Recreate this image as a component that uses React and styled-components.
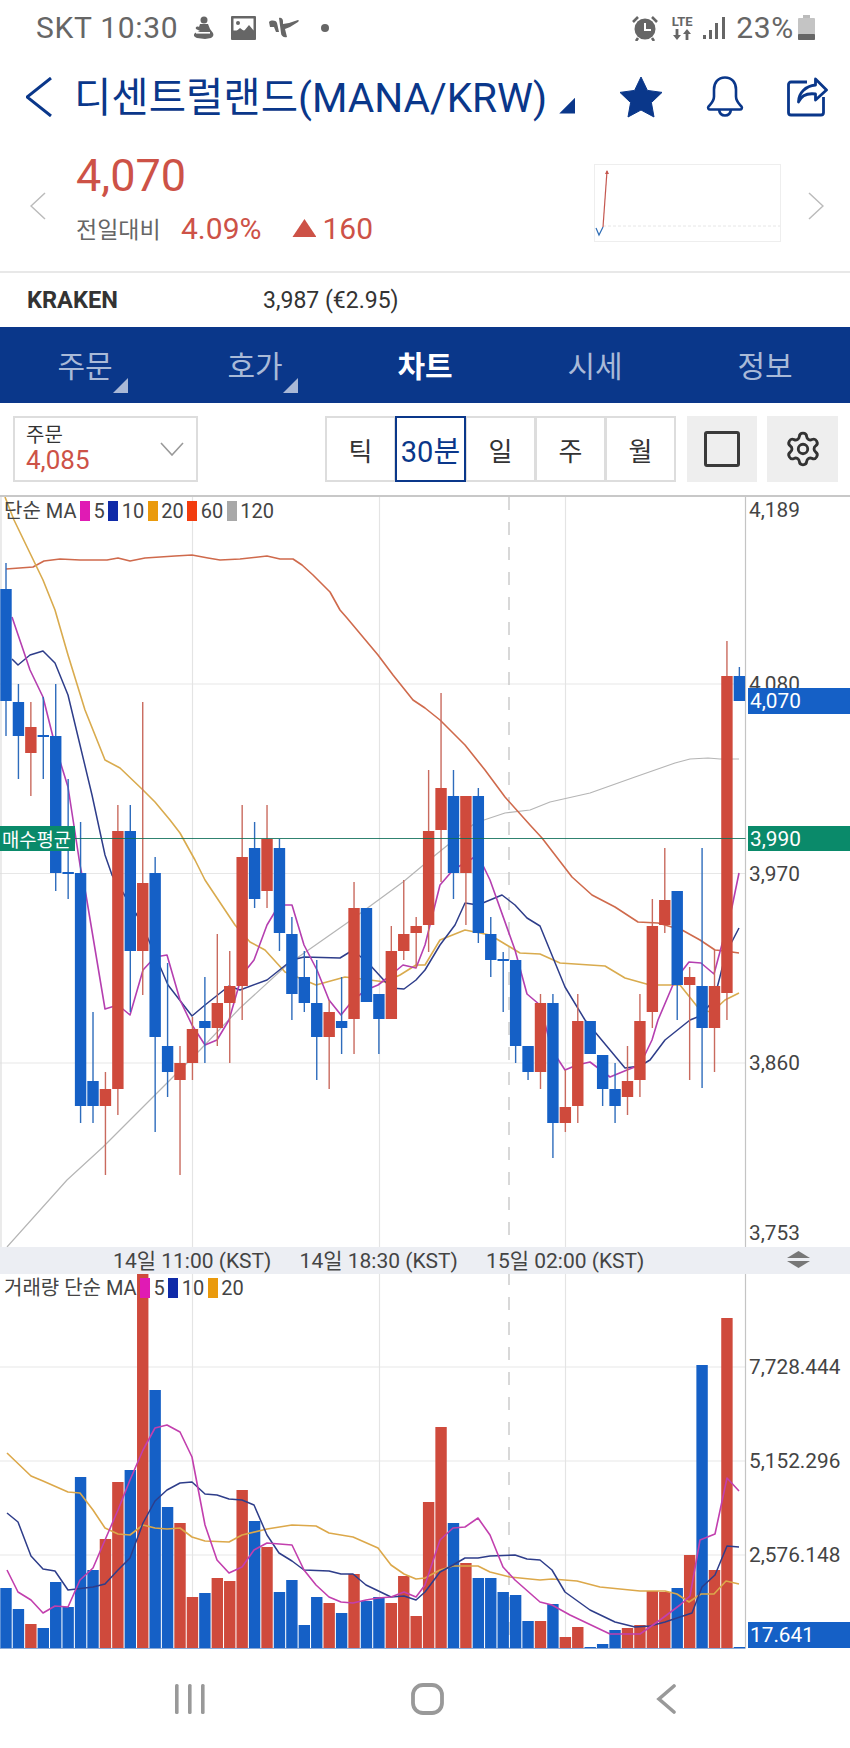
import React from "react";
import styled, { createGlobalStyle } from "styled-components";
import { Settings } from "lucide-react";

const RED = "#cf4a3c";
const BLUE = "#1560c6";
const NAVY = "#0a378a";
const TEXT_RED = "#cd5247";

const GlobalStyle = createGlobalStyle`
  html, body {
    margin: 0;
    padding: 0;
    background: #fff;
  }
  body {
    font-family: Roboto, "Noto Sans CJK KR", sans-serif;
    color: #333;
  }
`;

const Page = styled.div`
  width: 850px;
  height: 1748px;
  display: flex;
  flex-direction: column;
  overflow: hidden;
`;

const StatusBar = styled.div`
  height: 55px;
  display: flex;
  align-items: center;
  padding: 0 35px 0 36px;
  color: #666;
  font-size: 30px;
  letter-spacing: 0.7px;
`;

const StatusText = styled.span`
  line-height: 1;
`;

const StatusGroup = styled.div`
  display: flex;
  align-items: center;
  margin-left: ${(p) => p.$left || "0"};
`;

const Lte = styled.div`
  width: 26px;
  display: flex;
  flex-direction: column;
  align-items: center;
  font-size: 13px;
  font-weight: 700;
  line-height: 14px;
  letter-spacing: 0;
`;

const Header = styled.header`
  height: 83px;
  display: flex;
  align-items: center;
  padding: 0 22px 0 26px;
`;

const Title = styled.h1`
  margin: 0 0 0 22px;
  padding-top: 3px;
  font-size: 40.6px;
  font-weight: 400;
  color: ${NAVY};
  line-height: 1;
  white-space: nowrap;
`;

const TitleCaret = styled.span`
  width: 16px;
  height: 16px;
  margin: 18px 0 0 12px;
  background: ${NAVY};
  clip-path: polygon(100% 0, 100% 100%, 0 100%);
`;

const HeaderIcons = styled.div`
  display: flex;
  align-items: center;
  margin-left: auto;
`;

const Quote = styled.section`
  height: 133px;
  display: flex;
  align-items: center;
  border-bottom: 2px solid #e8e8e8;
`;

const PriceCol = styled.div`
  display: flex;
  flex-direction: column;
  margin-left: 30px;
  margin-top: -14px;
`;

const Price = styled.div`
  font-size: 45px;
  line-height: 54px;
  color: ${TEXT_RED};
`;

const ChangeRow = styled.div`
  display: flex;
  align-items: center;
  margin-top: 7px;
  height: 36px;
  color: ${TEXT_RED};
  font-size: 30px;
`;

const ChangeLabel = styled.span`
  width: 105px;
  font-size: 23px;
  color: #666;
`;

const UpArrow = styled.span`
  width: 24px;
  height: 18px;
  margin: 0 6px 0 31px;
  background: ${TEXT_RED};
  clip-path: polygon(50% 0, 100% 100%, 0 100%);
`;

const Spark = styled.div`
  width: 187px;
  height: 78px;
  margin: -3px 0 0 auto;
  border: 1px solid #eee;
  box-sizing: border-box;
`;

const ExchangeRow = styled.div`
  height: 54px;
  display: flex;
  align-items: center;
  padding-left: 27px;
  font-size: 23px;
  color: #333;
`;

const Exchange = styled.span`
  width: 236px;
  font-size: 23.6px;
  font-weight: 700;
`;

const Tabs = styled.nav`
  height: 76px;
  display: flex;
  background: ${NAVY};
`;

const Tab = styled.div`
  position: relative;
  flex: 1;
  display: flex;
  align-items: center;
  justify-content: center;
  padding-bottom: 2px;
  font-size: 30px;
  font-weight: ${(p) => (p.$active ? 700 : 400)};
  color: ${(p) => (p.$active ? "#fff" : "#a9bad8")};

  ${(p) =>
    p.$corner &&
    `&::after {
      content: "";
      position: absolute;
      right: 42px;
      bottom: 10px;
      width: 15px;
      height: 15px;
      background: #a9b8d6;
      clip-path: polygon(100% 0, 100% 100%, 0 100%);
    }`}
`;

const Toolbar = styled.div`
  height: 92px;
  display: flex;
  align-items: flex-start;
  padding: 13px 12px 0 13px;
  box-sizing: border-box;
`;

const Select = styled.div`
  width: 186px;
  height: 66px;
  box-sizing: border-box;
  display: flex;
  align-items: center;
  justify-content: space-between;
  padding: 0 12px 0 11px;
  border: 2px solid #ddd;
`;

const SelectLabel = styled.div`
  font-size: 20px;
  line-height: 22px;
  color: #333;
`;

const SelectValue = styled.div`
  font-size: 26px;
  line-height: 29px;
  color: ${TEXT_RED};
`;

const Segments = styled.div`
  display: flex;
  height: 66px;
  margin-left: 128px;
`;

const Segment = styled.div`
  width: 71px;
  margin-left: -1px;
  box-sizing: border-box;
  display: flex;
  align-items: center;
  justify-content: center;
  font-size: ${(p) => (p.$active ? "29px" : "26px")};
  color: ${(p) => (p.$active ? NAVY : "#333")};
  border: 2px solid ${(p) => (p.$active ? NAVY : "#ddd")};
  position: relative;
  z-index: ${(p) => (p.$active ? 1 : 0)};
`;

const SquareButton = styled.div`
  width: 71px;
  height: 66px;
  margin-left: ${(p) => p.$left || "10px"};
  display: flex;
  align-items: center;
  justify-content: center;
  background: #eeeeee;
  color: #333;
`;

const SquareBox = styled.div`
  width: 30px;
  height: 30px;
  border: 3px solid #3a3a3a;
  border-radius: 3px;
`;

const Panel = styled.div`
  position: relative;
  height: ${(p) => p.$height}px;
  border-top: ${(p) => (p.$ruled ? "2px solid #c8c8c8" : "none")};
  box-sizing: border-box;
`;

const Plot = styled.svg`
  display: block;
  width: 850px;
  height: 100%;
`;

const Legend = styled.div`
  position: absolute;
  top: ${(p) => p.$top}px;
  left: 4px;
  display: flex;
  align-items: center;
  font-size: 20px;
  line-height: 20px;
  color: #444;
  white-space: nowrap;
`;

const Swatch = styled.span`
  width: 10px;
  height: 20px;
  margin: 0 3.5px;
  background: ${(p) => p.$color};
`;

const AxisLabel = styled.div`
  position: absolute;
  left: 749px;
  top: ${(p) => p.$y}px;
  transform: translateY(-50%);
  font-size: 20.8px;
  line-height: 24px;
  color: #444;
`;

const PriceTag = styled.div`
  position: absolute;
  left: ${(p) => p.$left}px;
  top: ${(p) => p.$y}px;
  width: ${(p) => p.$width}px;
  height: ${(p) => p.$height}px;
  display: flex;
  align-items: center;
  padding-left: ${(p) => p.$pad}px;
  box-sizing: border-box;
  background: ${(p) => p.$color};
  color: #fff;
  font-size: ${(p) => p.$size || "20.8px"};
  white-space: nowrap;
`;

const TimeBar = styled.div`
  position: relative;
  height: 27px;
  display: flex;
  align-items: center;
  padding: 0 0 4px 99px;
  box-sizing: border-box;
  background: #eceef3;
  font-size: 21px;
  color: #444;
`;

const TimeLabel = styled.div`
  width: 186.5px;
  text-align: center;
  white-space: nowrap;
`;

const Resize = styled.div`
  position: absolute;
  left: 787px;
  top: 4px;
  display: flex;
  flex-direction: column;
  gap: 3px;
`;

const ResizeTip = styled.span`
  width: 23px;
  height: 7px;
  background: #777;
  clip-path: ${(p) =>
    p.$down
      ? "polygon(0 0, 100% 0, 50% 100%)"
      : "polygon(50% 0, 100% 100%, 0 100%)"};
`;

const BottomNav = styled.div`
  flex: 1;
  display: flex;
  align-items: center;
  color: #999;
`;

// top of wick, top of body, bottom of body, bottom of wick, colour (page y coords)
const candles = [
  [563, 589, 701, 736, "b"], [684, 702, 736, 779, "b"], [702, 727, 753, 796, "r"],
  [697, 735, 737, 779, "b"], [684, 736, 873, 891, "b"], [779, 872, 874, 899, "b"],
  [822, 873, 1106, 1123, "b"], [1012, 1081, 1106, 1123, "b"], [1072, 1089, 1106, 1175, "r"],
  [805, 831, 1089, 1115, "r"], [805, 831, 951, 1012, "b"], [702, 883, 951, 995, "r"],
  [857, 873, 1037, 1132, "b"], [963, 1046, 1072, 1097, "b"], [1046, 1063, 1080, 1175, "r"],
  [1017, 1029, 1063, 1080, "r"], [977, 1021, 1028, 1063, "b"], [934, 1003, 1028, 1046, "r"],
  [951, 986, 1003, 1063, "r"], [805, 857, 986, 1020, "r"], [822, 848, 899, 908, "b"],
  [805, 839, 891, 908, "r"], [839, 848, 933, 951, "b"], [917, 934, 994, 1020, "b"],
  [951, 977, 1003, 1012, "b"], [960, 1003, 1037, 1080, "b"], [1000, 1012, 1037, 1089, "r"],
  [977, 1021, 1028, 1054, "b"], [882, 908, 1019, 1054, "r"], [908, 908, 1002, 1002, "b"],
  [994, 994, 1019, 1054, "b"], [926, 951, 1019, 1019, "r"], [880, 934, 951, 960, "r"],
  [917, 926, 933, 968, "r"], [770, 831, 925, 952, "r"], [693, 788, 830, 882, "r"],
  [770, 796, 873, 899, "b"], [796, 796, 873, 925, "r"], [788, 796, 933, 943, "b"],
  [917, 934, 960, 977, "b"], [952, 959, 961, 1012, "b"], [960, 960, 1046, 1063, "b"],
  [1046, 1046, 1072, 1080, "b"], [994, 1003, 1072, 1089, "r"], [994, 1003, 1123, 1158, "b"],
  [1070, 1107, 1123, 1132, "r"], [994, 1021, 1106, 1123, "r"], [1021, 1021, 1054, 1054, "b"],
  [1055, 1055, 1089, 1106, "b"], [1063, 1089, 1106, 1123, "b"], [1046, 1081, 1097, 1115, "r"],
  [994, 1021, 1080, 1097, "r"], [899, 926, 1012, 1028, "r"], [848, 900, 925, 933, "r"],
  [891, 891, 985, 1020, "b"], [967, 977, 985, 1080, "r"], [848, 986, 1028, 1088, "b"],
  [950, 986, 1028, 1072, "r"], [641, 676, 993, 1020, "r"], [667, 676, 701, 701, "b"],
];

const volumes = [
  [1588, "b"], [1609, "b"], [1624, "r"], [1628, "b"], [1582, "b"], [1607, "b"], [1477, "b"],
  [1570, "b"], [1539, "r"], [1482, "r"], [1470, "b"], [1273, "r"], [1390, "b"], [1507, "b"],
  [1523, "r"], [1597, "r"], [1593, "b"], [1578, "r"], [1581, "r"], [1490, "r"], [1521, "b"],
  [1547, "r"], [1592, "b"], [1580, "b"], [1625, "b"], [1597, "b"], [1603, "r"], [1613, "b"],
  [1574, "r"], [1601, "b"], [1597, "b"], [1603, "r"], [1576, "r"], [1616, "r"], [1502, "r"],
  [1427, "r"], [1523, "b"], [1563, "r"], [1578, "b"], [1578, "b"], [1592, "b"], [1595, "b"],
  [1621, "b"], [1621, "r"], [1604, "b"], [1637, "r"], [1627, "r"], [1647, "b"], [1644, "b"],
  [1630, "b"], [1628, "r"], [1625, "r"], [1591, "r"], [1592, "r"], [1588, "b"], [1555, "r"],
  [1365, "b"], [1570, "r"], [1318, "r"], [1647, "b"],
];

const priceLines = [
  { color: "#b5b5b5", width: 1.2, pts: "7,1247 67,1180 103,1147 153,1097 200,1050 240,1008 287,965 347,923 403,882 433,857 475,823 505,813 530,810 550,802 590,793 635,777 675,763 690,759 708,758 720,759 739,759" },
  { color: "#cf6a4c", width: 1.6, pts: "6,569 33,567 44,561 60,559 80,560 107,560 118,558 130,561 145,558 175,556 192,555 208,558 220,560 240,559 267,556 280,559 293,559 302,565 313,575 330,592 340,610 347,618 378,655 393,675 413,700 425,708 440,720 465,745 485,770 505,797 530,825 542,838 572,877 592,895 615,907 638,922 658,923 682,930 700,940 715,950 725,951 739,953" },
  { color: "#d9ab4e", width: 1.6, pts: "5,497 14,520 43,580 55,610 68,655 85,710 105,760 120,768 143,790 155,802 170,820 180,833 195,860 205,880 235,925 250,942 265,950 285,972 316,985 345,977 370,980 385,982 400,975 416,965 425,965 440,940 465,930 490,935 520,953 540,954 560,963 590,965 605,966 625,978 650,985 665,985 680,985 700,1010 712,1012 725,1000 739,993" },
  { color: "#2e3d8a", width: 1.5, pts: "12,659 18,665 30,655 43,651 55,663 68,695 80,745 92,795 105,855 112,875 140,920 168,985 192,1016 205,1005 229,986 240,990 267,980 292,960 304,957 340,958 353,950 370,965 391,988 404,989 416,980 425,970 440,945 455,925 465,903 478,905 502,895 515,905 527,918 540,926 565,987 585,1020 625,1068 640,1066 650,1060 665,1040 690,1020 700,1016 714,1000 726,953 739,928" },
  { color: "#b53fb0", width: 1.6, pts: "12,617 30,670 43,697 55,745 68,787 80,865 86,895 105,1009 118,1005 130,1015 143,970 155,957 167,955 180,1000 192,1025 205,1045 217,1040 229,1020 242,975 254,960 267,925 279,905 292,905 304,945 317,970 329,1000 341,1015 353,1000 366,990 378,985 391,975 403,965 416,968 425,945 440,885 453,870 478,855 490,880 515,950 527,994 540,1005 552,1050 565,1070 577,1065 590,1062 610,1077 627,1070 640,1065 652,1040 658,1020 675,980 689,962 701,963 714,974 732,907 739,873" },
];

const volumeLines = [
  { color: "#dca84a", width: 1.6, pts: "7,1453 31,1476 43,1481 68,1492 80,1493 93,1510 105,1528 118,1534 130,1535 143,1525 155,1528 167,1529 180,1528 192,1537 205,1541 229,1542 242,1535 267,1529 292,1525 316,1526 329,1533 353,1537 378,1548 391,1565 404,1574 416,1579 425,1578 440,1570 453,1566 478,1566 490,1572 510,1577 540,1580 552,1579 577,1581 600,1587 640,1591 665,1591 677,1594 689,1602 701,1594 714,1594 726,1581 739,1584" },
  { color: "#2e3d8a", width: 1.5, pts: "7,1513 18,1522 31,1556 43,1569 55,1571 68,1590 93,1587 105,1584 118,1570 130,1558 143,1523 155,1501 167,1490 180,1483 192,1482 205,1494 217,1495 229,1499 242,1500 254,1505 267,1535 279,1553 292,1561 304,1570 329,1571 341,1574 353,1574 366,1585 391,1597 404,1596 416,1600 425,1592 440,1572 453,1565 465,1558 478,1558 490,1556 515,1555 527,1559 540,1560 552,1570 565,1592 590,1610 615,1622 635,1627 650,1626 665,1622 692,1613 702,1587 715,1575 727,1546 739,1547" },
  { color: "#c23fae", width: 1.6, pts: "7,1570 18,1592 31,1600 43,1613 55,1606 68,1607 80,1580 93,1568 105,1540 118,1510 130,1480 143,1450 155,1428 167,1425 180,1432 192,1457 205,1525 217,1560 229,1573 242,1567 254,1550 267,1543 292,1545 304,1570 316,1585 329,1597 341,1602 353,1603 366,1600 378,1598 391,1597 404,1592 416,1597 425,1585 440,1540 453,1528 465,1527 478,1518 490,1535 503,1567 515,1580 540,1602 552,1605 570,1615 610,1634 640,1634 660,1620 680,1605 690,1596 700,1540 715,1534 727,1478 739,1491" },
];

const centerX = (i) => 6 + 12.43 * i;
const GRID_X = [192.5, 379.5, 565.5];
const PLOT_RIGHT = 745.5;

function PriceChart() {
  return (
    <Plot viewBox="0 497 850 750">
      {[684, 873.5, 1063].map((y) => (
        <line key={y} x1="0" x2={PLOT_RIGHT} y1={y} y2={y} stroke="#e7e7e7" strokeWidth="1.2" />
      ))}
      {GRID_X.map((x) => (
        <line key={x} x1={x} x2={x} y1="495" y2="1247" stroke="#e4e4e4" strokeWidth="1.2" />
      ))}
      <line x1="1" x2="1" y1="495" y2="1247" stroke="#ddd" strokeWidth="1.2" />
      <line x1="509" x2="509" y1="497" y2="1247" stroke="#ccc" strokeWidth="1.5" strokeDasharray="13 12" />
      <line x1={PLOT_RIGHT} x2={PLOT_RIGHT} y1="495" y2="1247" stroke="#c4c4c4" strokeWidth="1.2" />
      {priceLines.map((l) => (
        <polyline key={l.color} points={l.pts} fill="none" stroke={l.color} strokeWidth={l.width} strokeLinejoin="round" />
      ))}
      {candles.map(([top, bodyTop, bodyBot, bottom, side], i) => (
        <g key={i}>
          <line
            x1={centerX(i)}
            x2={centerX(i)}
            y1={top}
            y2={bottom}
            stroke={side === "r" ? "#c96a5e" : "#2e6cbc"}
            strokeWidth="1.4"
          />
          <rect
            x={centerX(i) - 5.7}
            y={bodyTop}
            width="11.4"
            height={bodyBot - bodyTop}
            fill={side === "r" ? RED : BLUE}
          />
        </g>
      ))}
      <line x1="75" x2={PLOT_RIGHT} y1="838.5" y2="838.5" stroke="#0c6e58" strokeWidth="1.2" opacity="0.85" />
    </Plot>
  );
}

function VolumeChart() {
  return (
    <Plot viewBox="0 1274 850 376">
      {[1367, 1461, 1555].map((y) => (
        <line key={y} x1="0" x2={PLOT_RIGHT} y1={y} y2={y} stroke="#e7e7e7" strokeWidth="1.2" />
      ))}
      {GRID_X.map((x) => (
        <line key={x} x1={x} x2={x} y1="1274" y2="1648" stroke="#e4e4e4" strokeWidth="1.2" />
      ))}
      <line x1="509" x2="509" y1="1272" y2="1648" stroke="#ccc" strokeWidth="1.5" strokeDasharray="13 12" />
      <line x1={PLOT_RIGHT} x2={PLOT_RIGHT} y1="1274" y2="1648" stroke="#c4c4c4" strokeWidth="1.2" />
      <line x1="0" x2={PLOT_RIGHT} y1="1648.5" y2="1648.5" stroke="#8aa9d6" strokeWidth="1" />
      {volumes.map(([top, side], i) => (
        <rect
          key={i}
          x={centerX(i) - 5.7}
          y={top}
          width="11.4"
          height={1648 - top}
          fill={side === "r" ? RED : BLUE}
        />
      ))}
      {volumeLines.map((l) => (
        <polyline key={l.color} points={l.pts} fill="none" stroke={l.color} strokeWidth={l.width} strokeLinejoin="round" />
      ))}
    </Plot>
  );
}

function Chevron({ dir, width, height, color, stroke, style }) {
  const pts =
    dir === "left"
      ? `${width - 1},1 1,${height / 2} ${width - 1},${height - 1}`
      : `1,1 ${width - 1},${height / 2} 1,${height - 1}`;
  return (
    <svg width={width} height={height} style={style}>
      <polyline points={pts} fill="none" stroke={color} strokeWidth={stroke} />
    </svg>
  );
}

function StatusLeftIcons() {
  return (
    <StatusGroup $left="14px">
      <svg width="22" height="24" viewBox="0 0 22 24" fill="#666">
        <circle cx="12" cy="4" r="3.5" />
        <path d="M8 8h8l2 5 3 4c1 2 0 4-2 5l-6 1-8-1c-3-1-4-3-2-5l5-2-4-2c-1-2 1-3 3-2z" />
        <rect x="4" y="16" width="14" height="1.6" fill="#fff" />
      </svg>
      <svg width="25" height="24" viewBox="0 0 25 24" style={{ marginLeft: 17 }}>
        <rect width="25" height="24" rx="1" fill="#666" />
        <rect x="2.5" y="2.5" width="20" height="12" fill="#fff" />
        <circle cx="7" cy="7" r="2" fill="#666" />
        <path d="M2 18l7-6 4 3 5-6 5 6v3H2z" fill="#666" />
      </svg>
      <svg width="30" height="22" viewBox="0 0 30 22" fill="#666" style={{ marginLeft: 13 }}>
        <path d="M0 5c2-2 7-2 8 1l2 9H7L5 10 1 10zM10 1c2-1 4 1 4 3v3l6-1 9-3c1 0 1 1 0 2l-8 5-5 2 2 8c-3 1-6-1-6-4z" />
      </svg>
      <svg width="8" height="8" style={{ marginLeft: 22 }}>
        <circle cx="4" cy="4" r="4" fill="#666" />
      </svg>
    </StatusGroup>
  );
}

function StatusRightIcons() {
  return (
    <StatusGroup $left="auto">
      <svg width="26" height="26" viewBox="0 0 26 26">
        <circle cx="13" cy="14" r="10.5" fill="#666" />
        <path d="M13 8v7h6" fill="none" stroke="#fff" strokeWidth="2" />
        <path d="M1 7l5-5M25 7l-5-5" stroke="#666" strokeWidth="2.6" />
        <path d="M6 23l-2 3M20 23l2 3" stroke="#666" strokeWidth="2.6" />
      </svg>
      <Lte style={{ marginLeft: 11 }}>
        LTE
        <svg width="18" height="11" viewBox="0 0 18 11" fill="#666">
          <path d="M4 11L0 6h2.6V0h2.8v6H8zM14 0l4 5h-2.6v6h-2.8V5H10z" />
        </svg>
      </Lte>
      <svg width="22" height="22" viewBox="0 0 22 22" fill="#666" style={{ marginLeft: 8 }}>
        <rect x="0" y="18" width="3" height="4" />
        <rect x="6" y="13" width="3" height="9" />
        <rect x="12" y="6" width="3" height="16" />
        <rect x="19" y="0" width="3" height="22" />
      </svg>
      <StatusText style={{ marginLeft: 11 }}>23%</StatusText>
      <svg width="17" height="25" viewBox="0 0 17 25" style={{ marginLeft: 4 }}>
        <rect x="5" y="0" width="7" height="3" fill="#bbb" />
        <rect x="0" y="3" width="17" height="22" rx="1" fill="#c4c4c4" />
        <rect x="0" y="19" width="17" height="6" rx="1" fill="#666" />
      </svg>
    </StatusGroup>
  );
}

function App() {
  return (
    <Page>
      <GlobalStyle />
      <StatusBar>
        <StatusText>SKT 10:30</StatusText>
        <StatusLeftIcons />
        <StatusRightIcons />
      </StatusBar>

      <Header>
        <Chevron dir="left" width="26" height="40" color={NAVY} stroke="3" />
        <Title>디센트럴랜드(MANA/KRW)</Title>
        <TitleCaret />
        <HeaderIcons>
          <svg width="44" height="42" viewBox="0 0 44 42">
            <path
              d="M22 1l6.4 13.4 14.6 2-10.6 10.2 2.6 14.4L22 34l-13 7 2.6-14.4L1 16.4l14.6-2z"
              fill={NAVY}
              stroke={NAVY}
              strokeLinejoin="round"
            />
          </svg>
          <svg width="38" height="41" viewBox="0 0 38 41" fill="none" stroke={NAVY} strokeWidth="2.6" style={{ marginLeft: 43 }}>
            <path d="M19 1.5c-7 0-11 5-11 12v7c0 5-3 7-5.5 10-1 1.500 0 3 1.500 3h30c1.500 0 2.500-1.500 1.500-3-2.500-3-5.500-5-5.500-10v-7c0-7-4-12-11-12z" />
            <path d="M13 33.500c.5 4 3 6 6 6s5.500-2 6-6" />
          </svg>
          <svg width="41" height="40" viewBox="0 0 41 40" fill="none" stroke={NAVY} strokeWidth="2.8" style={{ marginLeft: 43 }}>
            <path d="M20 5H4a2.500 2.500 0 0 0-2.500 2.500v28A2.500 2.500 0 0 0 4 38h30a2.500 2.500 0 0 0 2.500-2.500V20" />
            <path d="M28.500 2l11 11-11 10v-6c-8-1-14 1-17 8 0-9 7-16 17-17z" strokeLinejoin="round" />
          </svg>
        </HeaderIcons>
      </Header>

      <Quote>
        <Chevron dir="left" width="16" height="28" color="#bbb" stroke="1.5" style={{ marginLeft: 30, marginTop: 2 }} />
        <PriceCol>
          <Price>4,070</Price>
          <ChangeRow>
            <ChangeLabel>전일대비</ChangeLabel>
            <span>4.09%</span>
            <UpArrow />
            <span>160</span>
          </ChangeRow>
        </PriceCol>
        <Spark>
          <svg width="185" height="76" viewBox="595 166 185 76">
            <line x1="603" x2="782" y1="227" y2="227" stroke="#e6e6e6" strokeDasharray="3 2" />
            <polyline points="596,229 599,236 603,228" fill="none" stroke="#2f6db5" strokeWidth="1.2" />
            <polyline points="603,228 607,172" fill="none" stroke="#c4574f" strokeWidth="1.2" />
            <path d="M605 175l2-4 2 4z" fill="#c4574f" />
          </svg>
        </Spark>
        <Chevron dir="right" width="16" height="28" color="#bbb" stroke="1.5" style={{ margin: "2px 26px 0 27px" }} />
      </Quote>

      <ExchangeRow>
        <Exchange>KRAKEN</Exchange>
        <span>3,987 (€2.95)</span>
      </ExchangeRow>

      <Tabs>
        <Tab $corner>주문</Tab>
        <Tab $corner>호가</Tab>
        <Tab $active>차트</Tab>
        <Tab>시세</Tab>
        <Tab>정보</Tab>
      </Tabs>

      <Toolbar>
        <Select>
          <div>
            <SelectLabel>주문</SelectLabel>
            <SelectValue>4,085</SelectValue>
          </div>
          <svg width="24" height="14" viewBox="0 0 24 14">
            <polyline points="1,1 12,13 23,1" fill="none" stroke="#999" strokeWidth="1.6" />
          </svg>
        </Select>
        <Segments>
          <Segment>틱</Segment>
          <Segment $active>30분</Segment>
          <Segment>일</Segment>
          <Segment>주</Segment>
          <Segment>월</Segment>
        </Segments>
        <SquareButton $left="11px">
          <SquareBox />
        </SquareButton>
        <SquareButton>
          <Settings size={38} strokeWidth={1.8} />
        </SquareButton>
      </Toolbar>

      <Panel $height={752} $ruled>
        <PriceChart />
        <Legend $top={4}>
          단순 MA
          <Swatch $color="#e01bb4" />5
          <Swatch $color="#0f2aa8" />10
          <Swatch $color="#ea9a0c" />20
          <Swatch $color="#f23c0e" />60
          <Swatch $color="#a8a8a8" />120
        </Legend>
        <PriceTag $left={0} $y={329} $width={75} $height={25} $pad={2} $size="18.8px" $color="#0a8a6a">
          매수평균
        </PriceTag>
        <AxisLabel $y={13}>4,189</AxisLabel>
        <AxisLabel $y={187}>4,080</AxisLabel>
        <PriceTag $left={748} $y={191} $width={102} $height={26} $pad={2} $color={BLUE}>
          4,070
        </PriceTag>
        <PriceTag $left={748} $y={329} $width={102} $height={25} $pad={2} $color="#0a8a6a">
          3,990
        </PriceTag>
        <AxisLabel $y={377}>3,970</AxisLabel>
        <AxisLabel $y={566}>3,860</AxisLabel>
        <AxisLabel $y={736}>3,753</AxisLabel>
      </Panel>

      <TimeBar>
        <TimeLabel>14일 11:00 (KST)</TimeLabel>
        <TimeLabel>14일 18:30 (KST)</TimeLabel>
        <TimeLabel>15일 02:00 (KST)</TimeLabel>
        <Resize>
          <ResizeTip />
          <ResizeTip $down />
        </Resize>
      </TimeBar>

      <Panel $height={376}>
        <VolumeChart />
        <Legend $top={4}>
          거래량 단순 MA
          <Swatch $color="#e01bb4" />5
          <Swatch $color="#0f2aa8" />10
          <Swatch $color="#ea9a0c" />20
        </Legend>
        <AxisLabel $y={93}>7,728.444</AxisLabel>
        <AxisLabel $y={187}>5,152.296</AxisLabel>
        <AxisLabel $y={281}>2,576.148</AxisLabel>
        <PriceTag $left={748} $y={348} $width={102} $height={26} $pad={2} $color={BLUE}>
          17.641
        </PriceTag>
      </Panel>

      <BottomNav>
        <svg width="30" height="30" viewBox="0 0 30 30" fill="#999" style={{ marginLeft: 175 }}>
          <rect x="0" y="0" width="3.600" height="30" rx="1.500" />
          <rect x="13" y="0" width="3.600" height="30" rx="1.500" />
          <rect x="26" y="0" width="3.600" height="30" rx="1.500" />
        </svg>
        <svg width="33" height="32" viewBox="0 0 33 32" fill="none" stroke="#999" strokeWidth="3.800" style={{ marginLeft: 206 }}>
          <rect x="2" y="2" width="29" height="28" rx="10" />
        </svg>
        <svg width="20" height="30" viewBox="0 0 20 30" fill="none" stroke="#999" strokeWidth="3.600" strokeLinecap="round" style={{ marginLeft: 212 }}>
          <polyline points="18,2 3,15 18,28" />
        </svg>
      </BottomNav>
    </Page>
  );
}

export default App;
